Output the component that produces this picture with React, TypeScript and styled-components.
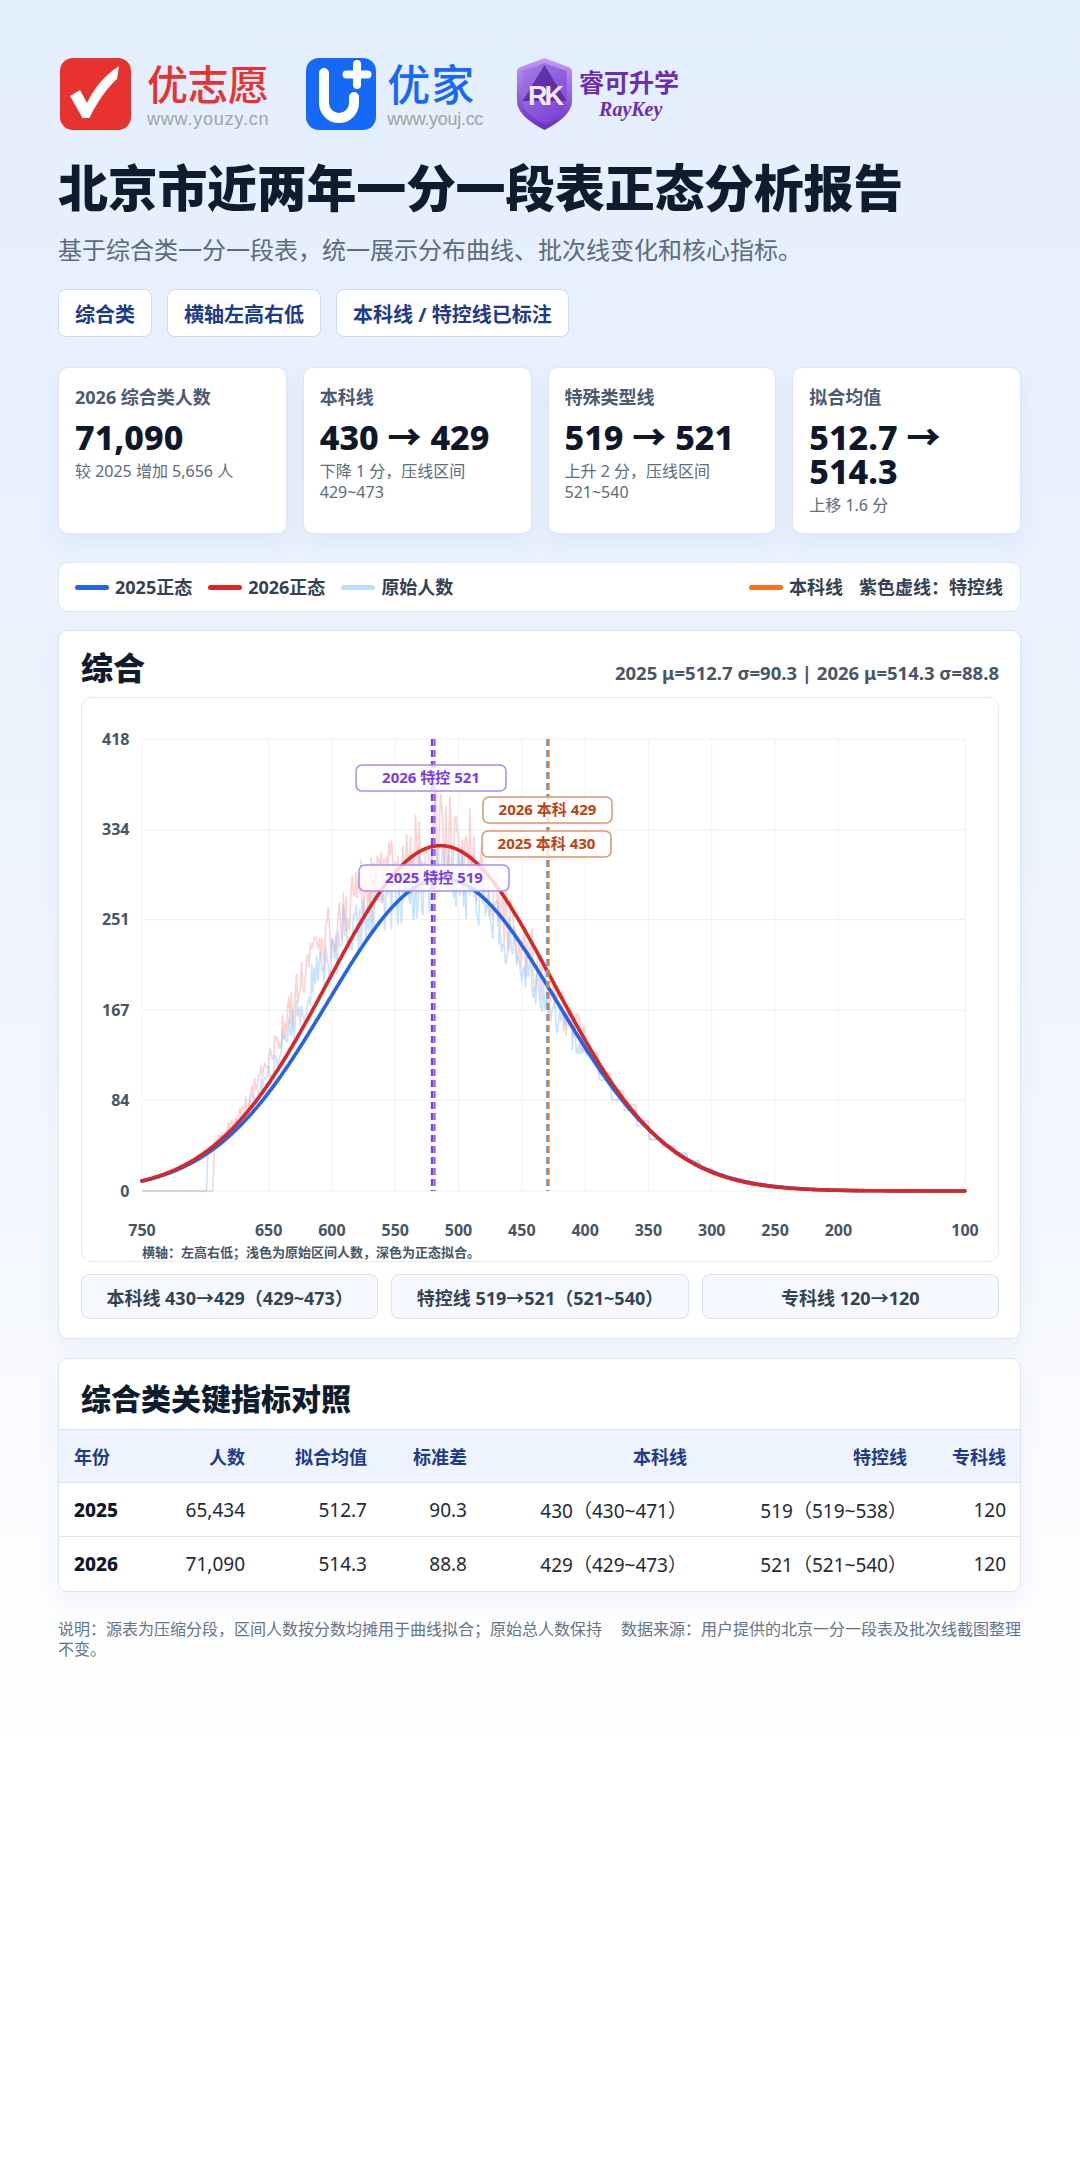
import React, { useMemo } from "react";
import styled, { createGlobalStyle } from "styled-components";

const FONT = `"Noto Sans", "Noto Sans CJK SC", sans-serif`;

const GlobalStyle = createGlobalStyle`
  html, body { margin: 0; padding: 0; }
  body { font-family: ${FONT}; background: #ffffff; }
  * { box-sizing: border-box; }
`;

const Page = styled.div`
  width: 1080px;
  min-height: 2160px;
  padding: 58px 59px 40px 58px;
  background: linear-gradient(180deg, #e3eefd 0px, #ecf3fd 700px, #f5f8fe 1250px, #fbfcff 1500px, #ffffff 1750px);
  font-family: ${FONT};
  color: #0f172a;
`;

/* ---------- logos ---------- */
const LogoRow = styled.div`
  display: flex;
  align-items: center;
  height: 72px;
  padding-left: 2px;
`;
const LogoMark = styled.div<{ $gap: number; $after: number }>`
  display: flex;
  flex-shrink: 0;
  margin-left: ${(p) => p.$gap}px;
  margin-right: ${(p) => p.$after}px;
`;
const LogoText = styled.div`
  display: flex;
  flex-direction: column;
  align-items: flex-start;
  justify-content: center;
`;
const BrandName = styled.div<{ $color: string; $size: number }>`
  font-family: "Noto Sans CJK SC", sans-serif;
  font-size: ${(p) => p.$size}px;
  line-height: 44px;
  height: 44px;
  font-weight: 500;
  color: ${(p) => p.$color};
  letter-spacing: ${(p) => (p.$size > 42 ? 1 : -0.5)}px;
`;
const BrandUrl = styled.div<{ $ls: number }>`
  font-family: "Liberation Sans", sans-serif;
  font-size: 18px;
  line-height: 18px;
  margin-top: 6px;
  color: #a3a3a3;
  letter-spacing: ${(p) => p.$ls}px;
`;
const RayName = styled.div`
  font-family: "Noto Sans CJK SC", sans-serif;
  font-size: 25px;
  line-height: 26px;
  font-weight: 700;
  color: #6b2db3;
`;
const RayEn = styled.div`
  font-family: "Liberation Serif", serif;
  font-style: italic;
  font-weight: 700;
  font-size: 20px;
  line-height: 22px;
  margin-top: 4px;
  margin-left: 20px;
  color: #6b2db3;
`;

/* ---------- title ---------- */
const Title = styled.h1`
  margin: 28px 0 0 0;
  font-size: 50px;
  line-height: 60px;
  font-weight: 900;
  color: #0f1c2e;
  letter-spacing: -0.3px;
`;
const Subtitle = styled.p`
  margin: 15px 0 0 0;
  font-size: 24px;
  line-height: 34px;
  color: #5b6b80;
`;
const TagRow = styled.div`
  display: flex;
  gap: 15px;
  margin-top: 22px;
`;
const Tag = styled.div`
  height: 48px;
  padding: 0 16px;
  display: flex;
  align-items: center;
  background: #ffffff;
  border: 1px solid #cadcf5;
  border-radius: 8px;
  font-size: 20px;
  font-weight: 700;
  color: #1e3a8a;
`;

/* ---------- stat cards ---------- */
const StatGrid = styled.div`
  display: grid;
  grid-template-columns: repeat(4, 1fr);
  gap: 16px;
  margin-top: 30px;
`;
const Card = styled.div`
  background: #ffffff;
  border: 1px solid #dbe6f4;
  border-radius: 10px;
  box-shadow: 0 10px 24px rgba(30, 64, 140, 0.06);
`;
const StatCard = styled(Card)`
  height: 167px;
  padding: 17px 16px 0 16px;
`;
const StatLabel = styled.div`
  font-size: 18px;
  line-height: 24px;
  font-weight: 700;
  color: #4b5a70;
`;
const StatValue = styled.div`
  margin-top: 11px;
  font-size: 34px;
  line-height: 34px;
  font-weight: 800;
  color: #0f172a;
`;
const StatSub = styled.div`
  margin-top: 7px;
  font-size: 16px;
  line-height: 21px;
  color: #5b6b80;
`;

/* ---------- legend ---------- */
const Legend = styled(Card)`
  margin-top: 28px;
  height: 50px;
  padding: 0 17px 0 16px;
  display: flex;
  align-items: center;
  justify-content: space-between;
  box-shadow: none;
`;
const LegendGroup = styled.div`
  display: flex;
  align-items: center;
  gap: 16px;
`;
const LegendItem = styled.div`
  display: flex;
  align-items: center;
  gap: 6px;
  font-size: 18px;
  line-height: 24px;
  font-weight: 700;
  color: #334155;
`;
const Swatch = styled.span<{ $color: string }>`
  display: inline-block;
  width: 34px;
  height: 5px;
  border-radius: 3px;
  background: ${(p) => p.$color};
`;

/* ---------- chart card ---------- */
const ChartCard = styled(Card)`
  margin-top: 18px;
  padding: 17px 21px 19px 22px;
`;
const ChartHead = styled.div`
  display: flex;
  align-items: baseline;
  justify-content: space-between;
  height: 40px;
`;
const ChartTitle = styled.h2`
  margin: 0;
  font-size: 32px;
  line-height: 40px;
  font-weight: 900;
  color: #0f1c2e;
`;
const ChartStats = styled.div`
  font-size: 18.5px;
  font-weight: 700;
  color: #475569;
`;
const PlotBox = styled.div`
  margin-top: 9px;
  height: 565px;
  border: 1px solid #e4ecf7;
  border-radius: 10px;
  background: #ffffff;
  overflow: hidden;
`;
const PlotSvg = styled.svg`
  display: block;
  font-family: ${FONT};
`;
const LineBoxes = styled.div`
  display: grid;
  grid-template-columns: repeat(3, 1fr);
  gap: 13px;
  margin-top: 12px;
`;
const LineBox = styled.div`
  height: 45px;
  display: flex;
  align-items: center;
  justify-content: center;
  background: #f5f9ff;
  border: 1px solid #d6e3f4;
  border-radius: 8px;
  font-size: 18px;
  font-weight: 700;
  color: #334155;
`;

/* ---------- table ---------- */
const TableCard = styled(Card)`
  margin-top: 19px;
  overflow: hidden;
`;
const TableTitle = styled.h2`
  margin: 0;
  padding: 20px 22px 0 22px;
  font-size: 30px;
  line-height: 40px;
  font-weight: 900;
  color: #0f1c2e;
`;
const Table = styled.table`
  margin-top: 10px;
  width: 100%;
  border-collapse: collapse;
  table-layout: fixed;
`;
const Th = styled.th<{ $left?: boolean }>`
  height: 53px;
  padding: 0 ${(p) => (p.$left ? "0 0 15px" : "14px 0 0")};
  text-align: ${(p) => (p.$left ? "left" : "right")};
  background: #eef4fd;
  border-top: 1px solid #d8e4f4;
  border-bottom: 1px solid #d8e4f4;
  font-size: 18px;
  font-weight: 700;
  color: #1e3a8a;
`;
const Td = styled.td<{ $left?: boolean; $strong?: boolean }>`
  height: 54px;
  padding: 0 ${(p) => (p.$left ? "0 0 15px" : "14px 0 0")};
  text-align: ${(p) => (p.$left ? "left" : "right")};
  font-size: 19px;
  font-weight: ${(p) => (p.$strong ? 800 : 400)};
  color: ${(p) => (p.$strong ? "#0f172a" : "#1f2937")};
  tr:not(:last-child) > & {
    border-bottom: 1px solid #e2e8f0;
  }
`;

const Footnote = styled.div`
  display: flex;
  gap: 14px;
  margin-top: 27px;
  font-size: 16px;
  line-height: 20px;
  color: #64748b;
`;
const NoteMain = styled.span`
  flex: 1 1 auto;
`;
const NoteSource = styled.span`
  flex: 0 0 auto;
  white-space: nowrap;
`;

/* ---------- logos svg ---------- */
const YouzyLogo = () => (
  <svg width="71" height="72" viewBox="0 0 71 72">
    <rect x="0" y="0" width="71" height="72" rx="13" fill="#e8322f" />
    <path
      d="M10 38 L20 32 L27 45 C34 30 45 17 59 8 L57 21 C47 30 37 44 29.5 60 L22.5 60 Z"
      fill="#ffffff"
    />
  </svg>
);

const YoujLogo = () => (
  <svg width="70" height="72" viewBox="0 0 70 72">
    <rect x="0" y="0" width="70" height="72" rx="13" fill="#1668f7" />
    <path d="M18 15 V45 A15 15 0 0 0 48 45 V39" stroke="#ffffff" strokeWidth="10" strokeLinecap="round" fill="none" />
    <path d="M51 6 V27 M40.5 16.5 H61.5" stroke="#ffffff" strokeWidth="8" strokeLinecap="round" fill="none" />
  </svg>
);

const RayKeyLogo = () => (
  <svg width="57" height="74" viewBox="0 0 57 74">
    <defs>
      <linearGradient id="rkOuter" x1="0" y1="0" x2="0" y2="1">
        <stop offset="0" stopColor="#c09df5" />
        <stop offset="1" stopColor="#6a2dc2" />
      </linearGradient>
      <linearGradient id="rkInner" x1="0" y1="0" x2="0.6" y2="1">
        <stop offset="0" stopColor="#a77be8" />
        <stop offset="1" stopColor="#7e45d6" />
      </linearGradient>
    </defs>
    <path d="M28.5 1 L53.5 10.5 Q56 11.5 56 14.5 L56 44 Q56 59 28.5 73 Q1 59 1 44 L1 14.5 Q1 11.5 3.5 10.5 Z" fill="url(#rkOuter)" />
    <path d="M28.5 6 L50.5 14 L50.5 44 Q50.5 55.5 28.5 67 Q6.5 55.5 6.5 44 L6.5 14 Z" fill="url(#rkInner)" />
    <path d="M28.5 8 L50.5 44 L6.5 44 Z" fill="#54249a" opacity="0.8" />
    <text x="28.5" y="48" textAnchor="middle" fontSize="27" fontWeight="700" fill="#f3eaff" letterSpacing="-3" fontFamily="Liberation Sans, sans-serif">
      RK
    </text>
  </svg>
);

/* ---------- chart ---------- */
const CW = 920;
const CH = 565;
const PL = 60;
const PR = 883;
const PT = 41;
const PB = 493;
const sx = (s: number) => PL + ((750 - s) * (PR - PL)) / 650;
const sy = (v: number) => PB - (v * (PB - PT)) / 418;
const normal = (s: number, n: number, mu: number, sd: number) =>
  (n / (sd * Math.sqrt(2 * Math.PI))) * Math.exp(-((s - mu) ** 2) / (2 * sd * sd));

function mulberry32(seed: number) {
  let a = seed;
  return () => {
    a |= 0;
    a = (a + 0x6d2b79f5) | 0;
    let t = Math.imul(a ^ (a >>> 15), 1 | a);
    t = (t + Math.imul(t ^ (t >>> 7), 61 | t)) ^ t;
    return ((t ^ (t >>> 14)) >>> 0) / 4294967296;
  };
}

function rawSeries(n: number, mu: number, sd: number, start: number, seed: number, amp: number) {
  const r = mulberry32(seed);
  const g = (s: number) =>
    1 + 0.27 * Math.exp(-(((s - 625) / 45) ** 2)) - 0.08 * Math.exp(-(((s - 440) / 35) ** 2));
  const pts: [number, number][] = [];
  for (let s = 750; s >= 400; s--) {
    let v = 0;
    if (s <= start) {
      v = normal(s, n, mu, sd) * g(s) * (1 + (r() - 0.5) * 2 * amp);
      if (r() < 0.08) v *= 1 + 0.07 * r();
    }
    pts.push([s, v]);
  }
  const edges = [400, 390, 380, 370, 360, 350, 340, 330, 320, 310, 300, 290, 280, 270, 255, 240, 225, 210, 190, 170, 150, 125, 100];
  for (let i = 0; i < edges.length - 1; i++) {
    const hi = edges[i];
    const lo = edges[i + 1];
    let sum = 0;
    for (let s = hi - 1; s >= lo; s--) sum += normal(s, n, mu, sd);
    const avg = (sum / (hi - lo)) * (1 + (r() - 0.5) * 0.14);
    for (let s = hi - 1; s >= lo; s--) pts.push([s, avg]);
  }
  return pts;
}

const toPath = (pts: [number, number][]) =>
  pts.map(([s, v], i) => `${i === 0 ? "M" : "L"}${sx(s).toFixed(1)} ${sy(v).toFixed(1)}`).join(" ");

const fitPath = (n: number, mu: number, sd: number) => {
  const pts: [number, number][] = [];
  for (let s = 750; s >= 100; s -= 1) pts.push([s, normal(s, n, mu, sd)]);
  return toPath(pts);
};

const Y_TICKS = [0, 84, 167, 251, 334, 418];
const X_TICKS = [750, 650, 600, 550, 500, 450, 400, 350, 300, 250, 200, 100];

type Marker = { s: number; color: string };
const MARKERS: Marker[] = [
  { s: 521, color: "#7c3aed" },
  { s: 519, color: "#8b5cf6" },
  { s: 430, color: "#60a5fa" },
  { s: 429, color: "#f97316" },
];

type Label = { x: number; y: number; w: number; text: string; purple: boolean };
const LABELS: Label[] = [
  { x: 274, y: 67, w: 150, text: "2026 特控 521", purple: true },
  { x: 401, y: 99, w: 129, text: "2026 本科 429", purple: false },
  { x: 400, y: 133, w: 129, text: "2025 本科 430", purple: false },
  { x: 277, y: 167, w: 150, text: "2025 特控 519", purple: true },
];

const Chart = () => {
  const paths = useMemo(
    () => ({
      raw25: toPath(rawSeries(65434, 512.7, 90.3, 698, 25, 0.11)),
      raw26: toPath(rawSeries(71090, 514.3, 88.8, 693, 26, 0.12)),
      fit25: fitPath(65434, 512.7, 90.3),
      fit26: fitPath(71090, 514.3, 88.8),
    }),
    []
  );
  return (
    <PlotSvg width={CW} height={CH - 2} viewBox={`0 0 ${CW} ${CH - 2}`}>
      {Y_TICKS.map((v) => (
        <line key={`h${v}`} x1={PL} x2={PR} y1={sy(v)} y2={sy(v)} stroke="#edf2f9" strokeWidth="1.2" />
      ))}
      {X_TICKS.map((s) => (
        <line key={`v${s}`} x1={sx(s)} x2={sx(s)} y1={PT} y2={PB} stroke="#f0f4fa" strokeWidth="1.2" />
      ))}
      {Y_TICKS.map((v) => (
        <text key={`yl${v}`} x={47.5} y={sy(v) + 5.5} textAnchor="end" fontSize="16" fontWeight="700" fill="#475569">
          {v}
        </text>
      ))}
      {X_TICKS.map((s) => (
        <text key={`xl${s}`} x={sx(s)} y={538} textAnchor="middle" fontSize="16" fontWeight="700" fill="#475569">
          {s}
        </text>
      ))}
      <text x={PL} y={558.5} fontSize="13" fontWeight="700" fill="#475569">
        横轴：左高右低；浅色为原始区间人数，深色为正态拟合。
      </text>
      <path d={paths.raw26} fill="none" stroke="#fca5a5" strokeOpacity="0.5" strokeWidth="1.6" strokeLinejoin="round" />
      <path d={paths.raw25} fill="none" stroke="#93c5fd" strokeOpacity="0.5" strokeWidth="1.6" strokeLinejoin="round" />
      <path d={paths.fit25} fill="none" stroke="#2563eb" strokeWidth="3.6" strokeLinecap="round" strokeLinejoin="round" />
      <path d={paths.fit26} fill="none" stroke="#dc2626" strokeWidth="3.6" strokeLinecap="round" strokeLinejoin="round" />
      {MARKERS.map((m) => (
        <line
          key={`m${m.s}`}
          x1={sx(m.s)}
          x2={sx(m.s)}
          y1={PT}
          y2={PB}
          stroke={m.color}
          strokeWidth="2.2"
          strokeDasharray="7 4"
        />
      ))}
      {LABELS.map((l) => (
        <g key={l.text}>
          <rect
            x={l.x}
            y={l.y}
            width={l.w}
            height={26}
            rx={6}
            fill="#ffffff"
            fillOpacity="0.82"
            stroke={l.purple ? "#a78bfa" : "#e0936f"}
            strokeWidth="1.5"
          />
          <text
            x={l.x + l.w / 2}
            y={l.y + 18}
            textAnchor="middle"
            fontSize="15"
            fontWeight="700"
            fill={l.purple ? "#7c3aed" : "#c2410c"}
          >
            {l.text}
          </text>
        </g>
      ))}
    </PlotSvg>
  );
};

/* ---------- data ---------- */
const STATS = [
  { label: "2026 综合类人数", value: "71,090", sub: "较 2025 增加 5,656 人" },
  { label: "本科线", value: "430 → 429", sub: "下降 1 分，压线区间 429~473" },
  { label: "特殊类型线", value: "519 → 521", sub: "上升 2 分，压线区间 521~540" },
  { label: "拟合均值", value: "512.7 → 514.3", sub: "上移 1.6 分" },
];

const ROWS = [
  { year: "2025", n: "65,434", mu: "512.7", sd: "90.3", bk: "430（430~471）", tk: "519（519~538）", zk: "120" },
  { year: "2026", n: "71,090", mu: "514.3", sd: "88.8", bk: "429（429~473）", tk: "521（521~540）", zk: "120" },
];

export default function App() {
  return (
    <>
      <GlobalStyle />
      <Page>
        <LogoRow>
          <LogoMark $gap={0} $after={16}>
            <YouzyLogo />
          </LogoMark>
          <LogoText>
            <BrandName $color="#e8322f" $size={41}>优志愿</BrandName>
            <BrandUrl $ls={0.8}>www.youzy.cn</BrandUrl>
          </LogoText>
          <LogoMark $gap={37} $after={11}>
            <YoujLogo />
          </LogoMark>
          <LogoText>
            <BrandName $color="#1668f7" $size={43}>优家</BrandName>
            <BrandUrl $ls={-0.3}>www.youj.cc</BrandUrl>
          </LogoText>
          <LogoMark $gap={33} $after={6}>
            <RayKeyLogo />
          </LogoMark>
          <LogoText>
            <RayName>睿可升学</RayName>
            <RayEn>RayKey</RayEn>
          </LogoText>
        </LogoRow>

        <Title>北京市近两年一分一段表正态分析报告</Title>
        <Subtitle>基于综合类一分一段表，统一展示分布曲线、批次线变化和核心指标。</Subtitle>

        <TagRow>
          <Tag>综合类</Tag>
          <Tag>横轴左高右低</Tag>
          <Tag>本科线 / 特控线已标注</Tag>
        </TagRow>

        <StatGrid>
          {STATS.map((s) => (
            <StatCard key={s.label}>
              <StatLabel>{s.label}</StatLabel>
              <StatValue>{s.value}</StatValue>
              <StatSub>{s.sub}</StatSub>
            </StatCard>
          ))}
        </StatGrid>

        <Legend>
          <LegendGroup>
            <LegendItem>
              <Swatch $color="#2563eb" />
              2025正态
            </LegendItem>
            <LegendItem>
              <Swatch $color="#dc2626" />
              2026正态
            </LegendItem>
            <LegendItem>
              <Swatch $color="#bfdbfe" />
              原始人数
            </LegendItem>
          </LegendGroup>
          <LegendGroup>
            <LegendItem>
              <Swatch $color="#f97316" />
              本科线
            </LegendItem>
            <LegendItem>紫色虚线：特控线</LegendItem>
          </LegendGroup>
        </Legend>

        <ChartCard>
          <ChartHead>
            <ChartTitle>综合</ChartTitle>
            <ChartStats>2025 μ=512.7 σ=90.3 | 2026 μ=514.3 σ=88.8</ChartStats>
          </ChartHead>
          <PlotBox>
            <Chart />
          </PlotBox>
          <LineBoxes>
            <LineBox>本科线 430→429（429~473）</LineBox>
            <LineBox>特控线 519→521（521~540）</LineBox>
            <LineBox>专科线 120→120</LineBox>
          </LineBoxes>
        </ChartCard>

        <TableCard>
          <TableTitle>综合类关键指标对照</TableTitle>
          <Table>
            <colgroup>
              <col style={{ width: 100 }} />
              <col style={{ width: 100 }} />
              <col style={{ width: 122 }} />
              <col style={{ width: 100 }} />
              <col style={{ width: 220 }} />
              <col style={{ width: 220 }} />
              <col style={{ width: 99 }} />
            </colgroup>
            <thead>
              <tr>
                <Th $left>年份</Th>
                <Th>人数</Th>
                <Th>拟合均值</Th>
                <Th>标准差</Th>
                <Th>本科线</Th>
                <Th>特控线</Th>
                <Th>专科线</Th>
              </tr>
            </thead>
            <tbody>
              {ROWS.map((r) => (
                <tr key={r.year}>
                  <Td $left $strong>{r.year}</Td>
                  <Td>{r.n}</Td>
                  <Td>{r.mu}</Td>
                  <Td>{r.sd}</Td>
                  <Td>{r.bk}</Td>
                  <Td>{r.tk}</Td>
                  <Td>{r.zk}</Td>
                </tr>
              ))}
            </tbody>
          </Table>
        </TableCard>

        <Footnote>
          <NoteMain>说明：源表为压缩分段，区间人数按分数均摊用于曲线拟合；原始总人数保持不变。</NoteMain>
          <NoteSource>数据来源：用户提供的北京一分一段表及批次线截图整理</NoteSource>
        </Footnote>
      </Page>
    </>
  );
}
